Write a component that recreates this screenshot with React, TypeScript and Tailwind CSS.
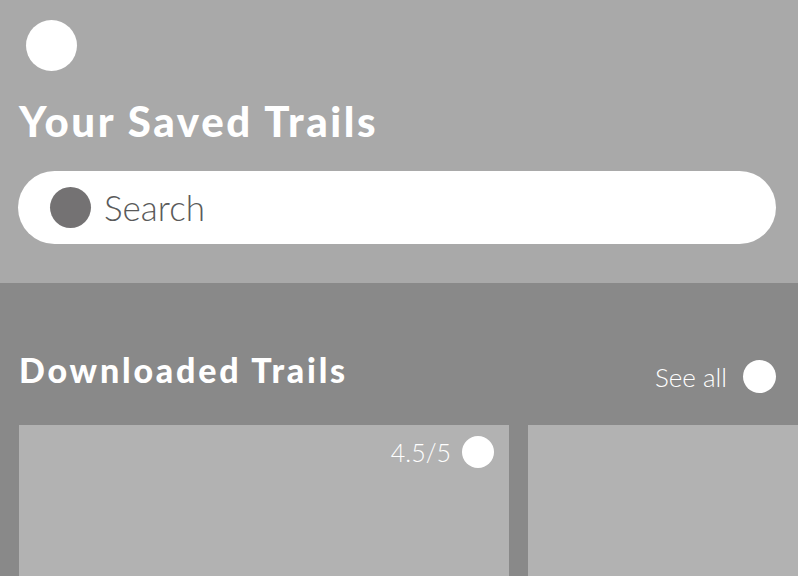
import React from "react";

const Dot: React.FC<{ className: string }> = ({ className }) => (
  <span className={"block shrink-0 rounded-full " + className} />
);

const App: React.FC = () => {
  return (
    <div className="w-[798px] h-[576px] overflow-hidden bg-[#898989] font-['Lato',sans-serif]">
      {/* header */}
      <div className="h-[283px] bg-[#a9a9a9] pt-[20px]">
        <Dot className="ml-[26px] w-[51px] h-[51px] bg-white" />
        <h1 className="mt-[29px] ml-[19px] text-[42px] leading-none font-black text-white tracking-[2.6px]">
          Your Saved Trails
        </h1>
        <div className="mt-[29px] mx-[18px] mr-[22px] h-[73px] rounded-full bg-white flex items-center pl-[32px]">
          <Dot className="w-[41px] h-[41px] bg-[#747273]" />
          <span className="ml-[13px] text-[35px] leading-none font-light text-[#5a5a5a]">
            Search
          </span>
        </div>
      </div>

      {/* downloaded */}
      <div className="pt-[70px]">
        <div className="flex items-start justify-between pl-[19px] pr-[22px]">
          <h2 className="text-[34px] leading-none font-black text-white tracking-[2.8px]">
            Downloaded Trails
          </h2>
          <div className="flex items-center gap-[16px] mt-[7px]">
            <span className="text-[26px] leading-none font-light text-white">See all</span>
            <Dot className="w-[33px] h-[33px] bg-white" />
          </div>
        </div>
        <div className="mt-[32px] flex gap-[19px] pl-[19px]">
          <div className="w-[490px] h-[160px] shrink-0 bg-[#b2b2b2] flex justify-end items-start pt-[11px] pr-[15px]">
            <div className="flex items-center gap-[11px]">
              <span className="text-[25px] leading-none font-light text-white">4.5/5</span>
              <Dot className="w-[32px] h-[32px] bg-white" />
            </div>
          </div>
          <div className="flex-1 h-[160px] bg-[#b2b2b2]" />
        </div>
      </div>
    </div>
  );
};

export default App;
